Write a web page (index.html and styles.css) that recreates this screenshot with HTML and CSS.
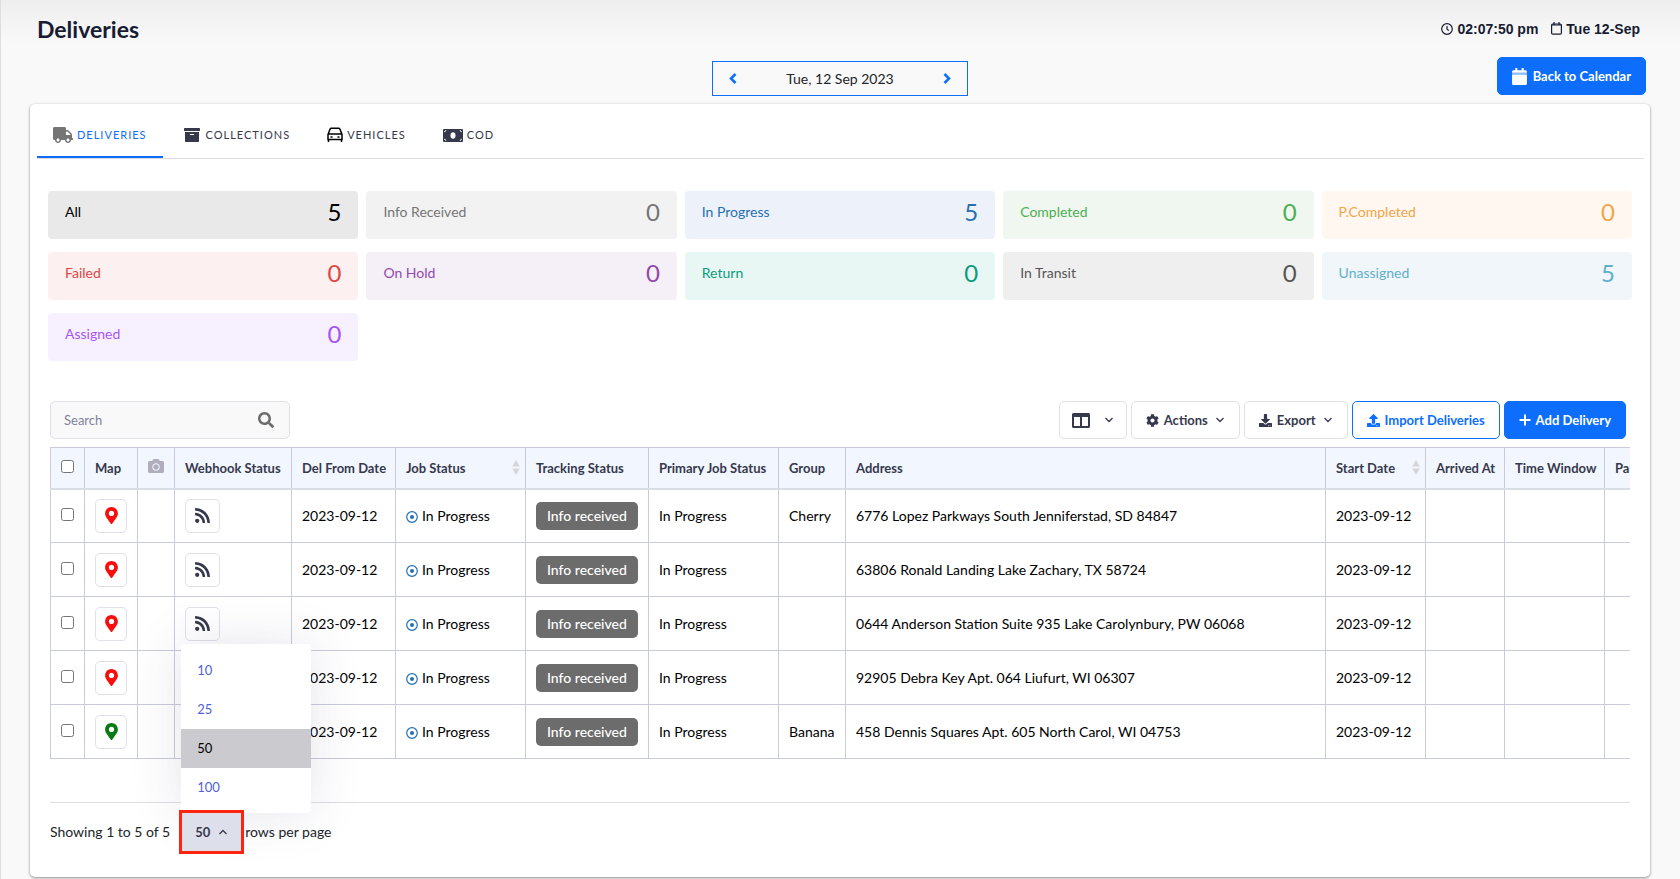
FILE: index.html
```html
<!DOCTYPE html>
<html lang="en">

<head>
    <meta charset="UTF-8">
    <meta name="viewport" content="width=device-width, initial-scale=1.0">
    <title>Deliveries</title>
    <link rel="stylesheet" href="styles.css">
</head>

<body>
    <!-- shared icons -->
    <svg class="sprite" aria-hidden="true">
        <symbol id="marker" viewBox="0 0 384 512"><path d="M172.268 501.67C26.97 291.031 0 269.413 0 192 0 85.961 85.961 0 192 0s192 85.961 192 192c0 77.413-26.97 99.031-172.268 309.67-9.535 13.774-29.93 13.773-39.464 0zM192 272c44.183 0 80-35.817 80-80s-35.817-80-80-80-80 35.817-80 80 35.817 80 80 80z"/></symbol>
        <symbol id="rss" viewBox="0 0 448 512"><path d="M128.081 415.959c0 35.369-28.672 64.041-64.041 64.041S0 451.328 0 415.959s28.672-64.041 64.041-64.041 64.04 28.673 64.04 64.041zm175.66 47.25c-8.354-154.6-132.185-278.587-286.95-286.95C7.656 175.765 0 183.105 0 192.253v48.069c0 8.415 6.49 15.472 14.887 16.018 111.832 7.284 201.473 96.702 208.772 208.772.547 8.397 7.604 14.887 16.018 14.887h48.069c9.149.001 16.489-7.655 15.995-16.79zm144.249.288C439.596 229.677 251.465 40.445 16.503 32.01 7.473 31.686 0 38.981 0 48.016v48.068c0 8.625 6.835 15.645 15.453 15.999 191.179 7.839 344.627 161.316 352.465 352.465.353 8.618 7.373 15.453 15.999 15.453h48.068c9.034-.001 16.329-7.474 16.005-16.504z"/></symbol>
        <symbol id="target" viewBox="0 0 12 12"><circle cx="6" cy="6" r="5.3" fill="none" stroke="currentColor" stroke-width="1.2"/><circle cx="6" cy="6" r="2"/></symbol>
        <symbol id="chevron" viewBox="0 0 10 10"><path d="M1.500 3l3.500 3.500L8.500 3" fill="none" stroke="currentColor" stroke-width="1.300"/></symbol>
        <symbol id="sort" viewBox="0 0 8 16"><path d="M4 0l4 7H0zM0 9h8l-4 7z"/></symbol>
    </svg>

    <header class="page-header">
        <h1>Deliveries</h1>
        <div class="clock">
            <svg width="12" height="12" viewBox="0 0 12 12" fill="none" stroke="currentColor" stroke-width="1.2"><circle cx="6" cy="6" r="5.300"/><path d="M6 3v3.200l1.800 1.300"/></svg>
            <span>02:07:50 pm</span>
            <svg class="clock-date" width="11" height="13" viewBox="0 0 11 13" fill="none" stroke="currentColor" stroke-width="1.2"><rect x="0.6" y="2" width="9.800" height="10.200" rx="1.200"/><path d="M0.600 3h9.800M3 0v2.500M8 0v2.500"/></svg>
            <span>Tue 12-Sep</span>
        </div>
    </header>

    <div class="date-row">
        <div class="date-picker">
            <button type="button" aria-label="Previous day"><svg width="8" height="11" viewBox="0 0 8 11"><path d="M6.500 1L2 5.500 6.500 10" fill="none" stroke="currentColor" stroke-width="2.500"/></svg></button>
            <span>Tue, 12 Sep 2023</span>
            <button type="button" aria-label="Next day"><svg width="8" height="11" viewBox="0 0 8 11"><path d="M1.500 1L6 5.500 1.500 10" fill="none" stroke="currentColor" stroke-width="2.500"/></svg></button>
        </div>
        <a class="btn btn-primary back" href="#">
            <svg width="15" height="17" viewBox="0 0 448 512" fill="currentColor"><path d="M0 464c0 26.500 21.500 48 48 48h352c26.500 0 48-21.500 48-48V192H0zM400 64h-48V12c0-7-5-12-12-12h-40c-7 0-12 5-12 12v52H160V12c0-7-5-12-12-12h-40c-7 0-12 5-12 12v52H48C21.500 64 0 85.500 0 112v32h448v-32c0-26.500-21.500-48-48-48z"/><path d="M0 144h448v48H0z" opacity=".55"/></svg>
            Back to Calendar
        </a>
    </div>

    <main class="card">
        <nav class="tabs">
            <a class="tab active" href="#">
                <svg width="20" height="16" viewBox="0 0 640 512" fill="#757575"><path d="M624 352h-16V243.900c0-12.700-5.100-24.900-14.100-33.900L494 110.100c-9-9-21.200-14.100-33.900-14.100H416V48c0-26.500-21.500-48-48-48H48C21.500 0 0 21.500 0 48v320c0 26.500 21.500 48 48 48h16c0 53 43 96 96 96s96-43 96-96h128c0 53 43 96 96 96s96-43 96-96h48c8.800 0 16-7.200 16-16v-32c0-8.800-7.200-16-16-16zM160 464c-26.500 0-48-21.500-48-48s21.500-48 48-48 48 21.500 48 48-21.500 48-48 48zm320 0c-26.500 0-48-21.500-48-48s21.500-48 48-48 48 21.500 48 48-21.500 48-48 48zm80-208H416V144h44.100l99.900 99.900V256z"/></svg>
                Deliveries
            </a>
            <a class="tab tab-collections" href="#">
                <svg width="16" height="16" viewBox="0 0 512 512" fill="currentColor"><path d="M32 448c0 17.700 14.300 32 32 32h384c17.700 0 32-14.300 32-32V160H32v288zm160-212c0-6.600 5.400-12 12-12h104c6.600 0 12 5.400 12 12v8c0 6.600-5.400 12-12 12H204c-6.600 0-12-5.400-12-12v-8zM480 32H32C14.300 32 0 46.300 0 64v48c0 8.800 7.200 16 16 16h480c8.800 0 16-7.200 16-16V64c0-17.700-14.300-32-32-32z"/></svg>
                Collections
            </a>
            <a class="tab" href="#">
                <svg width="16" height="16" viewBox="0 0 16 16" fill="none" stroke="#000" stroke-width="1.500"><path d="M1 7.500L3 2.200Q3.400 1.200 4.500 1.200h7Q12.600 1.200 13 2.200l2 5.300v5H1zM1.500 7h13M1.500 12v3M14.500 12v3"/><path d="M3.500 10h2M10.500 10h2"/></svg>
                Vehicles
            </a>
            <a class="tab" href="#">
                <svg width="20" height="13" viewBox="0 0 20 13"><rect width="20" height="13" rx="1" fill="currentColor"/><ellipse cx="10" cy="6.500" rx="2.500" ry="3.300" fill="#fff"/><path d="M1.200 2.800a1.600 1.600 0 0 0 1.600-1.600M17.200 1.200a1.600 1.600 0 0 0 1.600 1.600M18.800 10.200a1.600 1.600 0 0 0-1.600 1.600M2.800 11.800a1.600 1.600 0 0 0-1.600-1.600" fill="none" stroke="#fff"/></svg>
                COD
            </a>
        </nav>

        <section class="stats">
            <a class="stat all" href="#"><span>All</span><b>5</b></a>
            <a class="stat info" href="#"><span>Info Received</span><b>0</b></a>
            <a class="stat progress" href="#"><span>In Progress</span><b>5</b></a>
            <a class="stat completed" href="#"><span>Completed</span><b>0</b></a>
            <a class="stat partial" href="#"><span>P.Completed</span><b>0</b></a>
            <a class="stat failed" href="#"><span>Failed</span><b>0</b></a>
            <a class="stat hold" href="#"><span>On Hold</span><b>0</b></a>
            <a class="stat return" href="#"><span>Return</span><b>0</b></a>
            <a class="stat transit" href="#"><span>In Transit</span><b>0</b></a>
            <a class="stat unassigned" href="#"><span>Unassigned</span><b>5</b></a>
            <a class="stat assigned" href="#"><span>Assigned</span><b>0</b></a>
        </section>

        <div class="toolbar">
            <label class="search">
                <input type="text" placeholder="Search" aria-label="Search">
                <svg width="16" height="16" viewBox="0 0 512 512" fill="#6c6c6c"><path d="M505 442.700L405.300 343c-4.500-4.500-10.600-7-17-7H372c27.600-35.300 44-79.700 44-128C416 93.100 322.900 0 208 0S0 93.100 0 208s93.100 208 208 208c48.300 0 92.700-16.400 128-44v16.300c0 6.400 2.500 12.500 7 17l99.700 99.700c9.400 9.400 24.600 9.400 33.900 0l28.300-28.300c9.400-9.400 9.400-24.600.1-34zM208 336c-70.700 0-128-57.200-128-128 0-70.700 57.200-128 128-128 70.700 0 128 57.200 128 128 0 70.700-57.200 128-128 128z"/></svg>
            </label>
            <div class="actions">
                <button class="btn columns" type="button" aria-label="Columns">
                    <svg width="18" height="15" viewBox="0 0 18 15"><path fill="currentColor" fill-rule="evenodd" d="M1.500 0h15A1.500 1.500 0 0 1 18 1.500v12a1.500 1.500 0 0 1-1.500 1.500h-15A1.500 1.500 0 0 1 0 13.500v-12A1.500 1.500 0 0 1 1.500 0zM2 4v9h6V4zM10 4v9h6V4z"/></svg>
                    <svg class="caret"><use href="#chevron"/></svg>
                </button>
                <button class="btn" type="button">
                    <svg width="13" height="13" viewBox="0 0 512 512" fill="currentColor"><path d="M487.400 315.700l-42.600-24.600c4.300-23.200 4.300-47 0-70.200l42.600-24.600c4.900-2.800 7.100-8.600 5.500-14-11.100-35.600-30-67.800-54.700-94.600-3.800-4.100-10-5.100-14.800-2.300L380.800 110c-17.900-15.400-38.500-27.300-60.800-35.100V25.800c0-5.600-3.900-10.500-9.400-11.700-36.700-8.200-74.300-7.800-109.200 0-5.500 1.200-9.400 6.100-9.400 11.700V75c-22.200 7.900-42.800 19.800-60.800 35.100L88.700 85.500c-4.900-2.800-11-1.900-14.800 2.300-24.700 26.700-43.600 58.900-54.700 94.600-1.700 5.400.6 11.200 5.500 14L67.300 221c-4.300 23.200-4.300 47 0 70.200l-42.600 24.600c-4.900 2.800-7.100 8.600-5.500 14 11.100 35.600 30 67.800 54.700 94.600 3.800 4.100 10 5.100 14.800 2.300l42.600-24.600c17.900 15.400 38.500 27.300 60.800 35.100v49.200c0 5.600 3.900 10.500 9.400 11.700 36.700 8.200 74.300 7.800 109.200 0 5.500-1.200 9.400-6.100 9.400-11.700v-49.200c22.200-7.900 42.800-19.800 60.800-35.100l42.600 24.600c4.900 2.800 11 1.900 14.800-2.300 24.700-26.700 43.600-58.900 54.700-94.600 1.500-5.500-.7-11.300-5.600-14.100zM256 336c-44.100 0-80-35.900-80-80s35.900-80 80-80 80 35.900 80 80-35.900 80-80 80z"/></svg>
                    Actions
                    <svg class="caret"><use href="#chevron"/></svg>
                </button>
                <button class="btn" type="button">
                    <svg width="13" height="13" viewBox="0 0 512 512" fill="currentColor"><path d="M216 0h80c13.300 0 24 10.700 24 24v168h87.700c17.800 0 26.700 21.500 14.100 34.100L269.700 378.300c-7.500 7.500-19.800 7.500-27.300 0L90.100 226.100c-12.600-12.600-3.700-34.100 14.100-34.100H192V24c0-13.300 10.700-24 24-24zm296 376v112c0 13.300-10.700 24-24 24H24c-13.300 0-24-10.700-24-24V376c0-13.300 10.700-24 24-24h146.700l49 49c20.100 20.100 52.500 20.100 72.600 0l49-49H488c13.300 0 24 10.700 24 24zm-124 88c0-11-9-20-20-20s-20 9-20 20 9 20 20 20 20-9 20-20zm64 0c0-11-9-20-20-20s-20 9-20 20 9 20 20 20 20-9 20-20z"/></svg>
                    Export
                    <svg class="caret"><use href="#chevron"/></svg>
                </button>
                <button class="btn btn-outline" type="button">
                    <svg width="13" height="13" viewBox="0 0 512 512" fill="currentColor"><path d="M296 384h-80c-13.300 0-24-10.700-24-24V192h-87.700c-17.800 0-26.700-21.500-14.100-34.100L242.300 5.700c7.500-7.500 19.800-7.500 27.300 0l152.200 152.200c12.600 12.600 3.700 34.100-14.100 34.100H320v168c0 13.300-10.700 24-24 24zm216-8v112c0 13.300-10.700 24-24 24H24c-13.300 0-24-10.700-24-24V376c0-13.300 10.700-24 24-24h136v8c0 30.900 25.100 56 56 56h80c30.900 0 56-25.100 56-56v-8h136c13.300 0 24 10.700 24 24zm-124 88c0-11-9-20-20-20s-20 9-20 20 9 20 20 20 20-9 20-20zm64 0c0-11-9-20-20-20s-20 9-20 20 9 20 20 20 20-9 20-20z"/></svg>
                    Import Deliveries
                </button>
                <button class="btn btn-primary" type="button">
                    <svg width="12" height="12" viewBox="0 0 12 12"><path d="M6 0.500v11M0.500 6h11" stroke="currentColor" stroke-width="2"/></svg>
                    Add Delivery
                </button>
            </div>
        </div>

        <div class="table-wrap">
            <table>
                <colgroup>
                    <col class="c-check"><col class="c-map"><col class="c-photo"><col class="c-hook"><col class="c-from"><col class="c-job"><col class="c-track"><col class="c-primary"><col class="c-group"><col><col class="c-start"><col class="c-arrived"><col class="c-window"><col class="c-pallets">
                </colgroup>
                <thead>
                    <tr>
                        <th><input type="checkbox" aria-label="Select all"></th>
                        <th>Map</th>
                        <th><svg class="camera" width="16" height="16" viewBox="0 0 512 512" fill="#b0aebc"><path d="M512 144v288c0 26.500-21.500 48-48 48H48c-26.500 0-48-21.500-48-48V144c0-26.500 21.500-48 48-48h88l12.300-32.900c7-18.700 24.900-31.100 44.900-31.100h125.500c20 0 37.900 12.400 44.900 31.100L376 96h88c26.500 0 48 21.500 48 48zM376 288c0-66.200-53.800-120-120-120s-120 53.800-120 120 53.800 120 120 120 120-53.800 120-120zm-32 0c0 48.500-39.500 88-88 88s-88-39.500-88-88 39.500-88 88-88 88 39.500 88 88z"/></svg></th>
                        <th>Webhook Status</th>
                        <th>Del From Date</th>
                        <th><div class="sortable">Job Status<svg class="sort"><use href="#sort"/></svg></div></th>
                        <th>Tracking Status</th>
                        <th>Primary Job Status</th>
                        <th>Group</th>
                        <th>Address</th>
                        <th><div class="sortable">Start Date<svg class="sort"><use href="#sort"/></svg></div></th>
                        <th>Arrived At</th>
                        <th>Time Window</th>
                        <th>Pallets</th>
                    </tr>
                </thead>
                <tbody>
                    <tr>
                        <td><input type="checkbox" aria-label="Select row 1"></td>
                        <td><button class="icon-btn pin" type="button" aria-label="Map"><svg><use href="#marker"/></svg></button></td>
                        <td></td>
                        <td><button class="icon-btn hook" type="button" aria-label="Webhook"><svg><use href="#rss"/></svg></button></td>
                        <td>2023-09-12</td>
                        <td><svg class="target"><use href="#target"/></svg>In Progress</td>
                        <td><span class="badge">Info received</span></td>
                        <td>In Progress</td>
                        <td>Cherry</td>
                        <td>6776 Lopez Parkways South Jenniferstad, SD 84847</td>
                        <td>2023-09-12</td>
                        <td></td><td></td><td></td>
                    </tr>
                    <tr>
                        <td><input type="checkbox" aria-label="Select row 2"></td>
                        <td><button class="icon-btn pin" type="button" aria-label="Map"><svg><use href="#marker"/></svg></button></td>
                        <td></td>
                        <td><button class="icon-btn hook" type="button" aria-label="Webhook"><svg><use href="#rss"/></svg></button></td>
                        <td>2023-09-12</td>
                        <td><svg class="target"><use href="#target"/></svg>In Progress</td>
                        <td><span class="badge">Info received</span></td>
                        <td>In Progress</td>
                        <td></td>
                        <td>63806 Ronald Landing Lake Zachary, TX 58724</td>
                        <td>2023-09-12</td>
                        <td></td><td></td><td></td>
                    </tr>
                    <tr>
                        <td><input type="checkbox" aria-label="Select row 3"></td>
                        <td><button class="icon-btn pin" type="button" aria-label="Map"><svg><use href="#marker"/></svg></button></td>
                        <td></td>
                        <td><button class="icon-btn hook" type="button" aria-label="Webhook"><svg><use href="#rss"/></svg></button></td>
                        <td>2023-09-12</td>
                        <td><svg class="target"><use href="#target"/></svg>In Progress</td>
                        <td><span class="badge">Info received</span></td>
                        <td>In Progress</td>
                        <td></td>
                        <td>0644 Anderson Station Suite 935 Lake Carolynbury, PW 06068</td>
                        <td>2023-09-12</td>
                        <td></td><td></td><td></td>
                    </tr>
                    <tr>
                        <td><input type="checkbox" aria-label="Select row 4"></td>
                        <td><button class="icon-btn pin" type="button" aria-label="Map"><svg><use href="#marker"/></svg></button></td>
                        <td></td>
                        <td><button class="icon-btn hook" type="button" aria-label="Webhook"><svg><use href="#rss"/></svg></button></td>
                        <td>2023-09-12</td>
                        <td><svg class="target"><use href="#target"/></svg>In Progress</td>
                        <td><span class="badge">Info received</span></td>
                        <td>In Progress</td>
                        <td></td>
                        <td>92905 Debra Key Apt. 064 Liufurt, WI 06307</td>
                        <td>2023-09-12</td>
                        <td></td><td></td><td></td>
                    </tr>
                    <tr>
                        <td><input type="checkbox" aria-label="Select row 5"></td>
                        <td><button class="icon-btn pin done" type="button" aria-label="Map"><svg><use href="#marker"/></svg></button></td>
                        <td></td>
                        <td><button class="icon-btn hook" type="button" aria-label="Webhook"><svg><use href="#rss"/></svg></button></td>
                        <td>2023-09-12</td>
                        <td><svg class="target"><use href="#target"/></svg>In Progress</td>
                        <td><span class="badge">Info received</span></td>
                        <td>In Progress</td>
                        <td>Banana</td>
                        <td>458 Dennis Squares Apt. 605 North Carol, WI 04753</td>
                        <td>2023-09-12</td>
                        <td></td><td></td><td></td>
                    </tr>
                </tbody>
            </table>
        </div>

        <footer class="pager">
            <span>Showing 1 to 5 of 5</span>
            <div class="page-size">
                <button class="size-btn" type="button" aria-expanded="true">50 <svg class="caret up"><use href="#chevron"/></svg></button>
                <div class="menu">
                    <a href="#">10</a>
                    <a href="#">25</a>
                    <a class="selected" href="#">50</a>
                    <a href="#">100</a>
                </div>
            </div>
            <span>rows per page</span>
        </footer>
    </main>
</body>
</html>
```
FILE: styles.css
```css
* {
    box-sizing: border-box;
}

body {
    display: flex;
    flex-direction: column;
    min-height: 100vh;
    margin: 0;
    padding: 0 30px 2px 29px;
    border-left: 1px solid #dedede;
    background: linear-gradient(#eeeeee, #f9f9f9 44px);
    color: #212529;
    font-family: Lato, sans-serif;
    font-size: 14px;
    line-height: 20px;
}

a {
    color: inherit;
    text-decoration: none;
}

button,
input {
    font-family: inherit;
}

svg {
    flex: none;
}

.sprite {
    position: absolute;
    width: 0;
    height: 0;
}

.page-header {
    display: flex;
    justify-content: space-between;
    align-items: center;
    height: 57px;
    padding: 0 10px 0 7px;
    color: #181c32;
}

h1 {
    margin: 0;
    font-size: 23px;
    font-weight: 700;
}

.clock {
    display: flex;
    align-items: center;
    gap: 4px;
    font-family: "Liberation Sans", Arial, sans-serif;
    font-weight: bold;
}

.clock-date {
    margin-left: 9px;
}

.date-row {
    display: grid;
    grid-template-columns: 1fr 256px 1fr;
    align-items: end;
    height: 39px;
    margin-bottom: 8px;
}

.date-picker {
    display: flex;
    grid-column: 2;
    justify-content: space-between;
    align-items: center;
    height: 35px;
    padding: 0 16px;
    border: 1px solid #0d6efd;
}

.date-picker button {
    display: flex;
    padding: 0;
    border: 0;
    background: none;
    color: #0d6efd;
}

.btn {
    display: flex;
    align-items: center;
    gap: 5px;
    height: 38px;
    padding: 0 14px;
    border: 1px solid #e0dfea;
    border-radius: 5px;
    background: #fff;
    color: #36394c;
    font-size: 13px;
    font-weight: 700;
}

.btn-primary {
    border-color: #0d6efd;
    background: #0d6efd;
    color: #fff;
}

.btn-outline {
    border-color: #0d6efd;
    color: #0d6efd;
}

.back {
    align-self: start;
    justify-self: end;
    gap: 6px;
    margin-right: 4px;
}

.caret {
    width: 10px;
    height: 10px;
    margin-left: 2px;
}

.card {
    flex: 1;
    padding: 0 20px 20px;
    border-radius: 5px;
    background: #fff;
    box-shadow: 0 1px 3px rgba(0, 0, 0, 0.45);
}

.tabs {
    display: flex;
    gap: 5px;
    height: 55px;
    margin: 0 -14px 0 -13px;
    border-bottom: 1px solid #e0dde2;
}

.tab {
    display: flex;
    align-items: center;
    gap: 4px;
    height: 54px;
    padding: 10px 16px 0;
    border-bottom: 2px solid transparent;
    color: #36394c;
    font-size: 11px;
    letter-spacing: 1px;
    text-transform: uppercase;
}

.tab.active {
    border-color: #0d6efd;
    color: #0d6efd;
}

.tab-collections {
    gap: 6px;
}

.stats {
    display: grid;
    grid-template-columns: repeat(5, 1fr);
    gap: 13px 8px;
    margin: 32px -2px 40px;
}

.stat {
    display: flex;
    justify-content: space-between;
    height: 48px;
    padding: 11px 17px;
    border-radius: 4px;
}

.stat b {
    font-size: 24px;
    font-weight: 400;
    line-height: 20px;
}

.all {
    background: #e9e9e9;
    color: #000;
}

.info {
    background: #f2f2f2;
    color: #757575;
}

.progress {
    background: #edf2fa;
    color: #2570b0;
}

.completed {
    background: #f0f7f0;
    color: #4caf50;
}

.partial {
    background: #fff7f0;
    color: #f2a54a;
}

.failed {
    background: #fcf0f0;
    color: #df4747;
}

.hold {
    background: #f5f0f8;
    color: #9349ac;
}

.return {
    background: #e9f7f4;
    color: #0a9c7c;
}

.transit {
    background: #efefef;
    color: #555;
}

.unassigned {
    background: #f0f6f9;
    color: #5fb0c9;
}

.assigned {
    background: #f7f1ff;
    color: #a855f7;
}

.toolbar {
    display: flex;
    justify-content: space-between;
    padding-right: 4px;
    margin-bottom: 8px;
}

.search {
    display: flex;
    align-items: center;
    width: 240px;
    height: 38px;
    padding: 0 15px 0 13px;
    border: 1px solid #e0dfea;
    border-radius: 5px;
    background: #f9f9f9;
}

.search input {
    flex: 1;
    min-width: 0;
    padding: 0;
    border: 0;
    outline: 0;
    background: none;
    font-size: 13px;
}

.search input::placeholder {
    color: #7e8299;
}

.actions {
    display: flex;
    gap: 4px;
}

.columns {
    gap: 12px;
    padding: 0 12px;
}

.table-wrap {
    overflow: hidden;
}

table {
    width: calc(100% + 60px);
    border-collapse: collapse;
    table-layout: fixed;
}

.c-check { width: 34px; }
.c-map { width: 53px; }
.c-photo { width: 37px; }
.c-hook { width: 117px; }
.c-from { width: 104px; }
.c-job { width: 130px; }
.c-track { width: 123px; }
.c-primary { width: 130px; }
.c-group { width: 67px; }
.c-start { width: 100px; }
.c-arrived { width: 79px; }
.c-window { width: 100px; }
.c-pallets { width: 85px; }

th,
td {
    padding: 0 9px 0 10px;
    border: 1px solid #c9cbdb;
    text-align: left;
    white-space: nowrap;
}

th {
    height: 41px;
    border-bottom: 2px solid #d9dde6;
    background: #f2f6ff;
    color: #36394c;
    font-size: 13px;
    font-weight: 700;
}

td {
    height: 54px;
    color: #000;
}

th input,
td input {
    display: block;
    margin: 0 0 3px;
}

.camera {
    display: block;
    margin-bottom: 3px;
}

.sortable {
    display: flex;
    justify-content: space-between;
    align-items: center;
}

.sort {
    width: 8px;
    height: 15px;
    margin-right: -4px;
    fill: #d5d5d5;
}

.icon-btn {
    display: flex;
    justify-content: center;
    align-items: center;
    height: 34px;
    padding: 0;
    border: 1px solid #e0dfea;
    border-radius: 5px;
    background: #fff;
}

.pin {
    width: 32px;
}

.pin svg {
    width: 13px;
    height: 17px;
    fill: #fb0d0d;
}

.done svg {
    fill: #087a14;
}

.hook {
    width: 35px;
}

.hook svg {
    width: 15px;
    height: 17px;
    fill: #36394c;
}

.target {
    width: 12px;
    height: 12px;
    margin-right: 4px;
    color: #2570b0;
    fill: #2570b0;
    vertical-align: -2px;
}

.badge {
    display: inline-block;
    padding: 4px 11px;
    border-radius: 5px;
    background: #6c6c6c;
    color: #fff;
    font-weight: 500;
}

.pager {
    display: flex;
    align-items: center;
    margin-top: 43px;
    padding-top: 10px;
    border-top: 1px solid #dcdee4;
}

.page-size {
    position: relative;
    margin: 0 4px 0 12px;
}

.size-btn {
    position: relative;
    z-index: 2;
    display: flex;
    align-items: center;
    gap: 6px;
    width: 59px;
    height: 38px;
    padding: 0 13px;
    border: 0;
    outline: 3px solid #ff2410;
    background: #dddfea;
    color: #36394c;
    font-size: 13px;
    font-weight: 700;
}

.up {
    transform: rotate(180deg);
}

/* page size menu opens above the button */
.menu {
    position: absolute;
    z-index: 1;
    bottom: 38px;
    left: -1px;
    width: 130px;
    padding: 7px 0 6px;
    border-radius: 4px;
    background: #fff;
    box-shadow: 0 0 50px rgba(82, 63, 105, 0.15);
}

.menu a {
    display: block;
    padding: 0 16px;
    color: #4f5fd8;
    font-size: 13px;
    line-height: 39px;
}

.menu .selected {
    background: #cbcacf;
    color: #000;
}
```
